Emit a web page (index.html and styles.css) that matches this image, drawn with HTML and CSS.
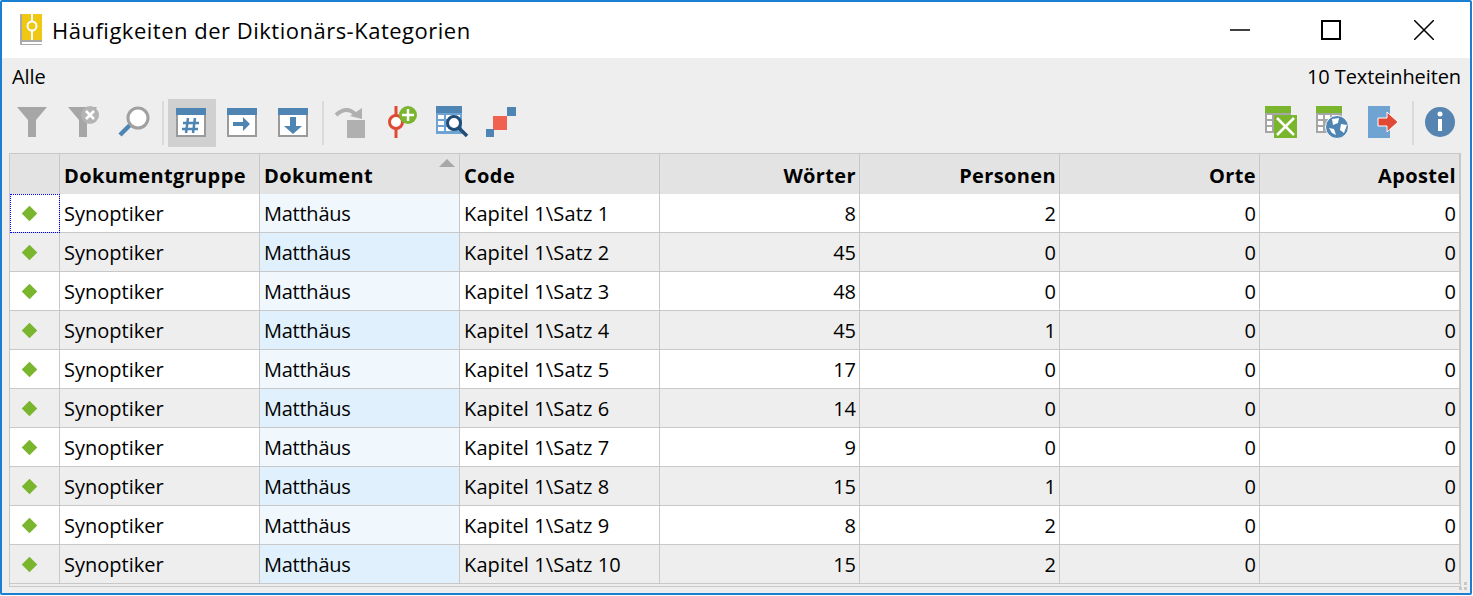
FILE: index.html
```html
<!DOCTYPE html>
<html lang="de">
<head>
    <meta charset="UTF-8">
    <meta name="viewport" content="width=device-width, initial-scale=1.0">
    <title>Häufigkeiten der Diktionärs-Kategorien</title>
    <link rel="stylesheet" href="styles.css">
</head>
<body>
    <div class="window">
        <div class="titlebar">
            <svg class="app-icon" width="22" height="31" viewBox="0 0 22 31">
                <rect x="0" y="0" width="22" height="31" rx="1" fill="#a9a9a9"/>
                <rect x="2" y="28" width="20" height="2" fill="#fff"/>
                <rect x="2" y="0" width="20" height="26" fill="#f0c814"/>
                <path d="M12 0v26" stroke="#fff" stroke-width="2"/>
                <circle cx="12" cy="12" r="4.5" fill="#f0c814" stroke="#fff" stroke-width="2"/>
            </svg>
            <span class="title">Häufigkeiten der Diktionärs-Kategorien</span>
            <div class="controls">
                <div class="control"><svg width="20" height="20" viewBox="0 0 20 20"><path d="M0 10h20" stroke="#000" stroke-width="1.5"/></svg></div>
                <div class="control control-max"><svg width="20" height="20" viewBox="0 0 20 20"><rect x="1" y="1" width="18" height="18" fill="none" stroke="#000" stroke-width="2"/></svg></div>
                <div class="control"><svg width="20" height="20" viewBox="0 0 20 20"><path d="M0 0L20 20M20 0L0 20" stroke="#000" stroke-width="1.5"/></svg></div>
            </div>
        </div>

        <div class="content">
            <div class="status">
                <span>Alle</span>
                <span>10 Texteinheiten</span>
            </div>

            <div class="toolbar">
                <div class="tool">
                    <svg width="48" height="48" viewBox="0 0 48 48"><path d="M9 8h30L28 21v17h-8V21z" fill="#a6a6a6"/></svg>
                </div>
                <div class="tool">
                    <svg width="48" height="48" viewBox="0 0 48 48">
                        <path d="M10 8h29L29 21v17h-8V21z" fill="#a6a6a6"/>
                        <circle cx="32" cy="16" r="9" fill="#b4b4b4"/>
                        <path d="M28 12l8 8M36 12l-8 8" stroke="#fff" stroke-width="2.5"/>
                    </svg>
                </div>
                <div class="tool">
                    <svg width="48" height="48" viewBox="0 0 48 48">
                        <path d="M12 36L23 25" stroke="#4f85b2" stroke-width="4.5"/>
                        <circle cx="30" cy="19" r="10" fill="#fff" stroke="#a0a0a0" stroke-width="3"/>
                    </svg>
                </div>
                <div class="sep"></div>
                <div class="tool active">
                    <svg width="48" height="48" viewBox="0 0 48 48">
                        <rect x="9" y="15" width="28" height="22" fill="#fff" stroke="#9a9a9a" stroke-width="2"/>
                        <rect x="8" y="9" width="30" height="7" fill="#4f85b2"/>
                        <path d="M20 19l-2 15M27 19l-2 15M15 24h16M14 30h16" stroke="#4f85b2" stroke-width="2.5"/>
                    </svg>
                </div>
                <div class="tool">
                    <svg width="48" height="48" viewBox="0 0 48 48">
                        <rect x="10" y="15" width="28" height="22" fill="#fff" stroke="#9a9a9a" stroke-width="2"/>
                        <rect x="9" y="9" width="30" height="7" fill="#4f85b2"/>
                        <path d="M15 23h10v-5l7 7-7 7v-5H15z" fill="#4f85b2"/>
                    </svg>
                </div>
                <div class="tool">
                    <svg width="48" height="48" viewBox="0 0 48 48">
                        <rect x="11" y="15" width="28" height="22" fill="#fff" stroke="#9a9a9a" stroke-width="2"/>
                        <rect x="10" y="9" width="30" height="7" fill="#4f85b2"/>
                        <path d="M22 18h6v9h6l-9 8-9-8h6z" fill="#4f85b2"/>
                    </svg>
                </div>
                <div class="sep"></div>
                <div class="tool">
                    <svg width="48" height="48" viewBox="0 0 48 48">
                        <rect x="19" y="21" width="18" height="18" fill="#b0b0b0"/>
                        <path d="M8 16Q19 6 28 16" fill="none" stroke="#b0b0b0" stroke-width="4"/>
                        <path d="M22 17L34 9v11z" fill="#b0b0b0"/>
                    </svg>
                </div>
                <div class="tool">
                    <svg width="48" height="48" viewBox="0 0 48 48">
                        <path d="M18 7v32" stroke="#e04a35" stroke-width="3"/>
                        <circle cx="18" cy="23" r="6.5" fill="#fff" stroke="#e04a35" stroke-width="3"/>
                        <circle cx="30" cy="16" r="9" fill="#7ab52e"/>
                        <path d="M30 10v12M24 16h12" stroke="#fff" stroke-width="2.5"/>
                    </svg>
                </div>
                <div class="tool">
                    <svg width="48" height="48" viewBox="0 0 48 48">
                        <rect x="8" y="7" width="26" height="7" fill="#4f85b2"/>
                        <rect x="8" y="14" width="26" height="21" fill="#6ea3d2"/>
                        <path d="M10 16h6v4h-6zM18 16h6v4h-6zM26 16h6v4h-6zM10 22h6v4h-6zM10 28h6v4h-6zM18 28h6v4h-6z" fill="#fff"/>
                        <path d="M31 29l8 8" stroke="#1f4e79" stroke-width="3.5"/>
                        <circle cx="26" cy="24" r="6.5" fill="#fff" stroke="#1f4e79" stroke-width="3"/>
                    </svg>
                </div>
                <div class="tool">
                    <svg width="48" height="48" viewBox="0 0 48 48">
                        <rect x="15" y="17" width="14" height="14" fill="#f0624f"/>
                        <rect x="29" y="8" width="9" height="9" fill="#4f85b2"/>
                        <rect x="8" y="30" width="8" height="8" fill="#4f85b2"/>
                    </svg>
                </div>

                <div class="toolbar-right">
                    <div class="tool">
                        <svg width="48" height="48" viewBox="0 0 48 48">
                            <rect x="7" y="7" width="26" height="7" fill="#7ab52e"/>
                            <rect x="7" y="14" width="26" height="20" fill="#a6a6a6"/>
                            <path d="M9 16h5v4H9zM16 16h5v4h-5zM23 16h5v4h-5zM9 22h5v4H9zM9 28h5v4H9z" fill="#fff"/>
                            <rect x="16" y="16" width="23" height="23" fill="#7ab52e"/>
                            <path d="M19 19l17 17M36 19L19 36" stroke="#fff" stroke-width="2.5"/>
                        </svg>
                    </div>
                    <div class="tool">
                        <svg width="48" height="48" viewBox="0 0 48 48">
                            <rect x="8" y="7" width="26" height="7" fill="#7ab52e"/>
                            <rect x="8" y="14" width="26" height="20" fill="#a6a6a6"/>
                            <path d="M10 16h5v4h-5zM17 16h5v4h-5zM24 16h5v4h-5zM10 22h5v4h-5zM10 28h5v4h-5z" fill="#fff"/>
                            <circle cx="29" cy="28" r="11.5" fill="#4f85b2" stroke="#fff" stroke-width="1"/>
                            <path d="M24 20l7-1-1 5-5 2zM33 25l6 1-3 8-4-3zM21 29l5 1 2 6-4-2z" fill="#fff"/>
                        </svg>
                    </div>
                    <div class="tool">
                        <svg width="48" height="48" viewBox="0 0 48 48">
                            <rect x="10" y="7" width="22" height="32" fill="#6ea3d2"/>
                            <path d="M20 19h9v-6l11 10-11 10v-6h-9z" fill="#e04a35" stroke="#fff" stroke-width="1"/>
                        </svg>
                    </div>
                    <div class="sep"></div>
                    <div class="tool">
                        <svg width="48" height="48" viewBox="0 0 48 48">
                            <circle cx="22" cy="23" r="15" fill="#5585b0"/>
                            <circle cx="22" cy="15" r="2.5" fill="#fff"/>
                            <rect x="20" y="20" width="4" height="12" fill="#fff"/>
                        </svg>
                    </div>
                </div>
            </div>

            <div class="grid-wrap">
                <table class="grid">
                    <colgroup>
                        <col class="col-marker">
                        <col class="col-data" span="7">
                    </colgroup>
                    <thead>
                        <tr>
                            <th></th>
                            <th>Dokumentgruppe</th>
                            <th class="sorted">Dokument</th>
                            <th>Code</th>
                            <th class="num">Wörter</th>
                            <th class="num">Personen</th>
                            <th class="num">Orte</th>
                            <th class="num">Apostel</th>
                        </tr>
                    </thead>
                    <tbody>
                        <tr><td class="focus"><span class="diamond"></span></td><td>Synoptiker</td><td class="doc">Matthäus</td><td class="code">Kapitel 1\Satz 1</td><td class="num">8</td><td class="num">2</td><td class="num">0</td><td class="num">0</td></tr>
                        <tr><td><span class="diamond"></span></td><td>Synoptiker</td><td class="doc">Matthäus</td><td class="code">Kapitel 1\Satz 2</td><td class="num">45</td><td class="num">0</td><td class="num">0</td><td class="num">0</td></tr>
                        <tr><td><span class="diamond"></span></td><td>Synoptiker</td><td class="doc">Matthäus</td><td class="code">Kapitel 1\Satz 3</td><td class="num">48</td><td class="num">0</td><td class="num">0</td><td class="num">0</td></tr>
                        <tr><td><span class="diamond"></span></td><td>Synoptiker</td><td class="doc">Matthäus</td><td class="code">Kapitel 1\Satz 4</td><td class="num">45</td><td class="num">1</td><td class="num">0</td><td class="num">0</td></tr>
                        <tr><td><span class="diamond"></span></td><td>Synoptiker</td><td class="doc">Matthäus</td><td class="code">Kapitel 1\Satz 5</td><td class="num">17</td><td class="num">0</td><td class="num">0</td><td class="num">0</td></tr>
                        <tr><td><span class="diamond"></span></td><td>Synoptiker</td><td class="doc">Matthäus</td><td class="code">Kapitel 1\Satz 6</td><td class="num">14</td><td class="num">0</td><td class="num">0</td><td class="num">0</td></tr>
                        <tr><td><span class="diamond"></span></td><td>Synoptiker</td><td class="doc">Matthäus</td><td class="code">Kapitel 1\Satz 7</td><td class="num">9</td><td class="num">0</td><td class="num">0</td><td class="num">0</td></tr>
                        <tr><td><span class="diamond"></span></td><td>Synoptiker</td><td class="doc">Matthäus</td><td class="code">Kapitel 1\Satz 8</td><td class="num">15</td><td class="num">1</td><td class="num">0</td><td class="num">0</td></tr>
                        <tr><td><span class="diamond"></span></td><td>Synoptiker</td><td class="doc">Matthäus</td><td class="code">Kapitel 1\Satz 9</td><td class="num">8</td><td class="num">2</td><td class="num">0</td><td class="num">0</td></tr>
                        <tr><td><span class="diamond"></span></td><td>Synoptiker</td><td class="doc">Matthäus</td><td class="code">Kapitel 1\Satz 10</td><td class="num">15</td><td class="num">2</td><td class="num">0</td><td class="num">0</td></tr>
                    </tbody>
                </table>
            </div>
            <div class="grip"></div>
        </div>
    </div>
</body>
</html>
```

FILE: styles.css
```css
html, body {
    margin: 0;
    padding: 0;
    background: #fff;
    overflow: hidden;
}
body {
    font-family: 'Open Sans', 'Noto Sans', sans-serif;
    font-size: 20px;
    color: #000;
}
.window {
    box-sizing: border-box;
    width: 1472px;
    height: 595px;
    border: 2px solid #1a7fd1;
    border-radius: 2px;
    background: #eee;
    display: flex;
    flex-direction: column;
}
.titlebar {
    height: 56px;
    flex: none;
    background: #fff;
    display: flex;
    align-items: center;
}
.app-icon {
    margin: -1px 10px 0 18px;
    flex: none;
}
.title {
    font-size: 22px;
    letter-spacing: 0.5px;
}
.controls {
    margin-left: auto;
    display: flex;
}
.control {
    box-sizing: border-box;
    width: 92px;
    height: 56px;
    display: flex;
    align-items: center;
    justify-content: center;
}
.control-max {
    padding-right: 2px;
}
.content {
    position: relative;
    flex: 1;
    display: flex;
    flex-direction: column;
}
.status {
    box-sizing: border-box;
    height: 38px;
    padding: 0 9px 2px 10px;
    letter-spacing: -0.1px;
    display: flex;
    justify-content: space-between;
    align-items: center;
}
.toolbar {
    margin-top: 3px;
    padding: 0 2px 0 6px;
    height: 48px;
    display: flex;
}
.toolbar-right {
    margin-left: auto;
    display: flex;
}
.tool {
    width: 48px;
    height: 48px;
    margin-right: 2px;
}
.tool svg {
    display: block;
}
.tool.active {
    background: #d0d0d0;
}
.sep {
    width: 2px;
    height: 44px;
    margin: 2px 4px;
    background: #dadada;
}
.grid-wrap {
    box-sizing: border-box;
    margin: 6px 0 0 7px;
    width: 1452px;
    height: 434px;
    border: 1px solid #c8c8c8;
}
.grid {
    table-layout: fixed;
    width: 1450px;
    border-collapse: separate;
    border-spacing: 0;
}
.col-marker {
    width: 50px;
}
.col-data {
    width: 200px;
}
.grid th, .grid td {
    box-sizing: border-box;
    padding: 1px 3px 0 4px;
    border-right: 1px solid #c8c8c8;
    text-align: left;
    white-space: nowrap;
}
.grid th {
    height: 40px;
    padding-top: 2px;
    background: #e3e3e3;
    font-weight: 700;
    letter-spacing: 0.37px;
}
.grid td {
    height: 39px;
    background: #fff;
    border-bottom: 1px solid #c8c8c8;
}
.grid tbody tr:nth-child(even) td {
    background: #eee;
}
.grid td.doc {
    background: #f0f8fe;
    letter-spacing: -0.25px;
}
.grid tbody tr:nth-child(even) td.doc {
    background: #e0f0fc;
}
.grid td.code {
    letter-spacing: 0.13px;
}
.grid .num {
    text-align: right;
}
.sorted {
    position: relative;
}
.sorted::after {
    content: "";
    position: absolute;
    top: 5px;
    right: 4px;
    border-left: 8px solid transparent;
    border-right: 8px solid transparent;
    border-bottom: 8px solid #a8a8a8;
}
.grid td.focus {
    outline: 1px dotted #00f;
    outline-offset: -1px;
}
.diamond {
    display: block;
    width: 11px;
    height: 11px;
    margin: -1px 0 0 10px;
    background: #7ab52e;
    transform: rotate(45deg);
}
.grip {
    position: absolute;
    right: 3px;
    bottom: 3px;
    width: 8px;
    height: 8px;
    background:
        linear-gradient(#c8c8c8, #c8c8c8) 5px 0 / 3px 3px no-repeat,
        linear-gradient(#c8c8c8, #c8c8c8) 0 5px / 3px 3px no-repeat,
        linear-gradient(#c8c8c8, #c8c8c8) 5px 5px / 3px 3px no-repeat;
}
```
